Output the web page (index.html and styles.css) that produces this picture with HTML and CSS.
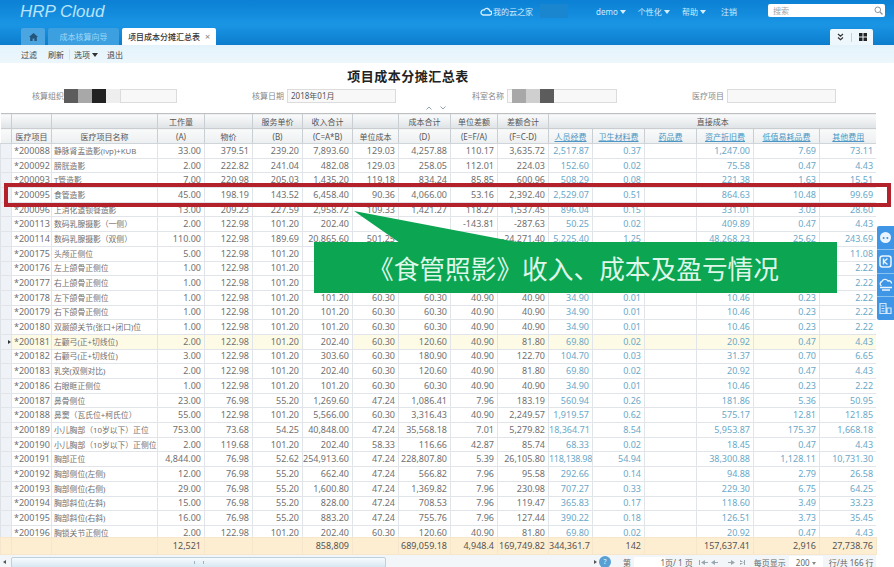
FILE: index.html
```html
<!DOCTYPE html>
<html lang="zh-CN">
<head>
  <meta charset="UTF-8" />
  <title>HRP Cloud | 项目成本分摊汇总表</title>
  <link rel="stylesheet" href="styles.css">
</head>
<body>
  <header class="topbar">
    <div class="top-row">
      <div class="logo">HRP Cloud</div>
      <nav class="top-nav">
        <a class="home-link">
          <svg width="12" height="9" viewBox="0 0 12 9"><path d="M3 8h6.500a2 2 0 0 0 .3-4A3 3 0 0 0 4.200 3 2.500 2.500 0 0 0 3 8z" fill="none" stroke="#d8f0ff" stroke-width="1.300"/></svg>
          我的云之家
        </a>
        <span class="masked-name"></span>
        <a>demo <i class="caret"></i></a>
        <a>个性化 <i class="caret"></i></a>
        <a class="nav-help">帮助 <i class="caret"></i></a>
        <a>注销</a>
      </nav>
      <div class="search">
        <span>搜索</span>
        <svg width="9" height="9" viewBox="0 0 9 9"><circle cx="3.800" cy="3.800" r="2.800" fill="none" stroke="#8a959c" stroke-width="1"/><path d="M6 6l2.500 2.500" stroke="#8a959c" stroke-width="1.200"/></svg>
      </div>
    </div>
    <div class="tab-row">
      <a class="tab tab-home">
        <svg width="9" height="8" viewBox="0 0 9 8"><path d="M4.500 0L9 4H7.800v4H5.400V5.400H3.600V8H1.200V4H0z" fill="#24557a"/></svg>
      </a>
      <a class="tab tab-wizard">成本核算向导</a>
      <a class="tab tab-active">项目成本分摊汇总表 <span class="tab-close">×</span></a>
      <div class="tab-tools">
        <svg width="7" height="8" viewBox="0 0 7 8"><path d="M1 1l2.500 2.200L6 1M1 4.500l2.500 2.200L6 4.500" fill="none" stroke="#333" stroke-width="1.200"/></svg>
        <span class="tool-sep"></span>
        <svg width="8" height="8" viewBox="0 0 8 8"><path d="M0 0h3.500v3.500H0zM4.500 0H8v3.500H4.500zM0 4.500h3.500V8H0zM4.500 4.500H8V8H4.500z" fill="#222"/></svg>
      </div>
    </div>
  </header>

  <div class="toolbar">
    <a>过滤</a>
    <a>刷新</a>
    <span class="bar-sep"></span>
    <a>选项 <i class="caret dark"></i></a>
    <a class="bar-exit">退出</a>
  </div>

  <h1 class="report-title">项目成本分摊汇总表</h1>

  <form class="filters">
    <label class="f-org">核算组织
      <span class="masked"><i class="m1"></i><i class="m2"></i><i class="m3"></i><i class="m4"></i></span>
      <input class="input-short" type="text" />
    </label>
    <label class="f-date">核算日期 <input class="input-long" type="text" value="2018年01月" /></label>
    <label class="f-dept">科室名称
      <span class="dept-box"><span class="masked"><i class="m2"></i><i class="m5"></i><i class="m1"></i></span></span>
    </label>
    <label class="f-item">医疗项目 <input class="input-long" type="text" /></label>
  </form>

  <div class="collapse-handle">
    <svg width="6" height="4" viewBox="0 0 6 4"><path d="M.5 3.500L3 1l2.500 2.500" fill="none" stroke="#8fa3ad"/></svg>
    <svg width="6" height="4" viewBox="0 0 6 4"><path d="M.5.500L3 3 5.500.500" fill="none" stroke="#8fa3ad"/></svg>
  </div>

  <section class="grid">
    <div class="grid-main">
      <table class="data">
        <colgroup><col class="c0"><col class="c1"><col class="c2"><col class="c3"><col class="c4"><col class="c5"><col class="c6"><col class="c7"><col class="c8"><col class="c9"><col class="c10"><col class="c11"><col class="c12"><col class="c13"><col class="c14"><col class="c15"><col class="c16"></colgroup>
        <thead>
          <tr class="head-top">
            <th></th><th></th><th></th><th>工作量</th><th></th><th>服务单价</th><th>收入合计</th><th></th><th>成本合计</th><th>单位差额</th><th>差额合计</th><th colspan="6">直接成本</th>
          </tr>
          <tr class="head-sub">
            <th></th><th>医疗项目</th><th>医疗项目名称</th><th>(A)</th><th>物价</th><th>(B)</th><th>(C=A*B)</th><th>单位成本</th><th>(D)</th><th>(E=F/A)</th><th>(F=C-D)</th>
            <th class="link">人员经费</th><th class="link">卫生材料费</th><th class="link">药品费</th><th class="link">资产折旧费</th><th class="link">低值易耗品费</th><th class="link">其他费用</th>
          </tr>
        </thead>
        <tbody>
          <tr><td></td><td>*200088</td><td>静脉肾盂造影(ivp)+KUB</td><td>33.00</td><td>379.51</td><td>239.20</td><td>7,893.60</td><td>129.03</td><td>4,257.88</td><td>110.17</td><td>3,635.72</td><td>2,517.87</td><td>0.37</td><td></td><td>1,247.00</td><td>7.69</td><td>73.11</td></tr>
          <tr><td></td><td>*200092</td><td>膀胱造影</td><td>2.00</td><td>222.82</td><td>241.04</td><td>482.08</td><td>129.03</td><td>258.05</td><td>112.01</td><td>224.03</td><td>152.60</td><td>0.02</td><td></td><td>75.58</td><td>0.47</td><td>4.43</td></tr>
          <tr><td></td><td>*200093</td><td>T管造影</td><td>7.00</td><td>220.98</td><td>205.03</td><td>1,435.20</td><td>119.18</td><td>834.24</td><td>85.85</td><td>600.96</td><td>508.29</td><td>0.08</td><td></td><td>221.38</td><td>1.63</td><td>15.51</td></tr>
          <tr><td></td><td>*200095</td><td>食管造影</td><td>45.00</td><td>198.19</td><td>143.52</td><td>6,458.40</td><td>90.36</td><td>4,066.00</td><td>53.16</td><td>2,392.40</td><td>2,529.07</td><td>0.51</td><td></td><td>864.63</td><td>10.48</td><td>99.69</td></tr>
          <tr><td></td><td>*200096</td><td>上消化道钡餐造影</td><td>13.00</td><td>209.23</td><td>227.59</td><td>2,958.72</td><td>109.33</td><td>1,421.27</td><td>118.27</td><td>1,537.45</td><td>896.04</td><td>0.15</td><td></td><td>331.01</td><td>3.03</td><td>28.60</td></tr>
          <tr><td></td><td>*200113</td><td>数码乳腺摄影（一侧）</td><td>2.00</td><td>122.98</td><td>101.20</td><td>202.40</td><td></td><td></td><td>-143.81</td><td>-287.63</td><td>50.25</td><td>0.02</td><td></td><td>409.89</td><td>0.47</td><td>4.43</td></tr>
          <tr><td></td><td>*200114</td><td>数码乳腺摄影（双侧）</td><td>110.00</td><td>122.98</td><td>189.69</td><td>20,865.60</td><td>501.25</td><td></td><td></td><td>-24,271.40</td><td>5,225.40</td><td>1.25</td><td></td><td>48,268.23</td><td>25.62</td><td>243.69</td></tr>
          <tr><td></td><td>*200175</td><td>头颅正侧位</td><td>5.00</td><td>122.98</td><td>101.20</td><td></td><td></td><td></td><td></td><td></td><td></td><td></td><td></td><td></td><td></td><td>11.08</td></tr>
          <tr><td></td><td>*200176</td><td>左上颌骨正侧位</td><td>1.00</td><td>122.98</td><td>101.20</td><td></td><td></td><td></td><td></td><td></td><td></td><td></td><td></td><td></td><td></td><td>2.22</td></tr>
          <tr><td></td><td>*200177</td><td>右上颌骨正侧位</td><td>1.00</td><td>122.98</td><td>101.20</td><td></td><td></td><td></td><td></td><td></td><td></td><td></td><td></td><td></td><td></td><td>2.22</td></tr>
          <tr><td></td><td>*200178</td><td>左下颌骨正侧位</td><td>1.00</td><td>122.98</td><td>101.20</td><td>101.20</td><td>60.30</td><td>60.30</td><td>40.90</td><td>40.90</td><td>34.90</td><td>0.01</td><td></td><td>10.46</td><td>0.23</td><td>2.22</td></tr>
          <tr><td></td><td>*200179</td><td>右下颌骨正侧位</td><td>1.00</td><td>122.98</td><td>101.20</td><td>101.20</td><td>60.30</td><td>60.30</td><td>40.90</td><td>40.90</td><td>34.90</td><td>0.01</td><td></td><td>10.46</td><td>0.23</td><td>2.22</td></tr>
          <tr><td></td><td>*200180</td><td>双颞颌关节(张口+闭口)位</td><td>1.00</td><td>122.98</td><td>101.20</td><td>101.20</td><td>60.30</td><td>60.30</td><td>40.90</td><td>40.90</td><td>34.90</td><td>0.01</td><td></td><td>10.46</td><td>0.23</td><td>2.22</td></tr>
          <tr class="current"><td><i class="row-mark"></i></td><td>*200181</td><td>左颧弓(正+切线位)</td><td>2.00</td><td>122.98</td><td>101.20</td><td class="plain">202.40</td><td>60.30</td><td>120.60</td><td>40.90</td><td>81.80</td><td>69.80</td><td>0.02</td><td></td><td>20.92</td><td>0.47</td><td>4.43</td></tr>
          <tr><td></td><td>*200182</td><td>右颧弓(正+切线位)</td><td>3.00</td><td>122.98</td><td>101.20</td><td>303.60</td><td>60.30</td><td>180.90</td><td>40.90</td><td>122.70</td><td>104.70</td><td>0.03</td><td></td><td>31.37</td><td>0.70</td><td>6.65</td></tr>
          <tr><td></td><td>*200183</td><td>乳突(双侧对比)</td><td>2.00</td><td>122.98</td><td>101.20</td><td>202.40</td><td>60.30</td><td>120.60</td><td>40.90</td><td>81.80</td><td>69.80</td><td>0.02</td><td></td><td>20.92</td><td>0.47</td><td>4.43</td></tr>
          <tr><td></td><td>*200186</td><td>右眼眶正侧位</td><td>1.00</td><td>122.98</td><td>101.20</td><td>101.20</td><td>60.30</td><td>60.30</td><td>40.90</td><td>40.90</td><td>34.90</td><td>0.01</td><td></td><td>10.46</td><td>0.23</td><td>2.22</td></tr>
          <tr><td></td><td>*200187</td><td>鼻骨侧位</td><td>23.00</td><td>76.98</td><td>55.20</td><td>1,269.60</td><td>47.24</td><td>1,086.41</td><td>7.96</td><td>183.19</td><td>560.94</td><td>0.26</td><td></td><td>181.86</td><td>5.36</td><td>50.95</td></tr>
          <tr><td></td><td>*200188</td><td>鼻窦（瓦氏位+柯氏位）</td><td>55.00</td><td>122.98</td><td>101.20</td><td>5,566.00</td><td>60.30</td><td>3,316.43</td><td>40.90</td><td>2,249.57</td><td>1,919.57</td><td>0.62</td><td></td><td>575.17</td><td>12.81</td><td>121.85</td></tr>
          <tr><td></td><td>*200189</td><td>小儿胸部（10岁以下）正位</td><td>753.00</td><td>73.68</td><td>54.25</td><td>40,848.00</td><td>47.24</td><td>35,568.18</td><td>7.01</td><td>5,279.82</td><td>18,364.71</td><td>8.54</td><td></td><td>5,953.87</td><td>175.37</td><td>1,668.18</td></tr>
          <tr><td></td><td>*200190</td><td>小儿胸部（10岁以下）正侧位</td><td>2.00</td><td>119.68</td><td>101.20</td><td>202.40</td><td>58.33</td><td>116.66</td><td>42.87</td><td>85.74</td><td>68.33</td><td>0.02</td><td></td><td>18.45</td><td>0.47</td><td>4.43</td></tr>
          <tr><td></td><td>*200191</td><td>胸部正位</td><td>4,844.00</td><td>76.98</td><td>52.62</td><td>254,913.60</td><td>47.24</td><td>228,807.80</td><td>5.39</td><td>26,105.80</td><td class="tight">118,138.98</td><td>54.94</td><td></td><td>38,300.88</td><td>1,128.11</td><td>10,731.30</td></tr>
          <tr><td></td><td>*200192</td><td>胸部侧位(左侧)</td><td>12.00</td><td>76.98</td><td>55.20</td><td>662.40</td><td>47.24</td><td>566.82</td><td>7.96</td><td>95.58</td><td>292.66</td><td>0.14</td><td></td><td>94.88</td><td>2.79</td><td>26.58</td></tr>
          <tr><td></td><td>*200193</td><td>胸部侧位(右侧)</td><td>29.00</td><td>76.98</td><td>55.20</td><td>1,600.80</td><td>47.24</td><td>1,369.82</td><td>7.96</td><td>230.98</td><td>707.27</td><td>0.33</td><td></td><td>229.30</td><td>6.75</td><td>64.25</td></tr>
          <tr><td></td><td>*200194</td><td>胸部斜位(左斜)</td><td>15.00</td><td>76.98</td><td>55.20</td><td>828.00</td><td>47.24</td><td>708.53</td><td>7.96</td><td>119.47</td><td>365.83</td><td>0.17</td><td></td><td>118.60</td><td>3.49</td><td>33.23</td></tr>
          <tr><td></td><td>*200195</td><td>胸部斜位(右斜)</td><td>16.00</td><td>76.98</td><td>55.20</td><td>883.20</td><td>47.24</td><td>755.76</td><td>7.96</td><td>127.44</td><td>390.22</td><td>0.18</td><td></td><td>126.51</td><td>3.73</td><td>35.45</td></tr>
          <tr><td></td><td>*200196</td><td>胸锁关节正侧位</td><td>2.00</td><td>122.98</td><td>101.20</td><td>202.40</td><td>60.30</td><td>120.60</td><td>40.90</td><td>81.80</td><td>69.80</td><td>0.02</td><td></td><td>20.92</td><td>0.47</td><td>4.43</td></tr>
        </tbody>
      </table>
    </div>

    <table class="data totals">
      <colgroup><col class="c0"><col class="c1"><col class="c2"><col class="c3"><col class="c4"><col class="c5"><col class="c6"><col class="c7"><col class="c8"><col class="c9"><col class="c10"><col class="c11"><col class="c12"><col class="c13"><col class="c14"><col class="c15"><col class="c16"></colgroup>
      <tr><td></td><td></td><td></td><td>12,521</td><td></td><td></td><td>858,809</td><td></td><td>689,059.18</td><td>4,948.4</td><td>169,749.82</td><td>344,361.7</td><td>142</td><td></td><td>157,637.41</td><td>2,916</td><td>27,738.76</td></tr>
    </table>

    <div class="grid-foot">
      <div class="scroll">
        <span class="scroll-arrow left"></span>
        <div class="scroll-track"><span class="thumb-grip"></span></div>
      </div>
      <div class="pager">
        <span class="scroll-arrow right"></span>
        <span class="help-dot">?</span>
        <span class="page-of">第</span>
        <span class="page-box">1</span>
        <span>页/ 1 页</span>
        <span class="pager-nav">
          <svg width="46" height="7" viewBox="0 0 46 7" fill="#9aa7b0"><path d="M0 1h1v5H0zM6 1v5L2 3.500zM6 3h3v1H6zM16 1v5l-4-2.500zM16 3h3v1h-3zM29 3h3v1h-3zM32 1v5l4-2.500zM41 3h3v1h-3zM41 1v5l4-2.500zM45 1h1v5h-1z"/></svg>
        </span>
        <span>每页显示</span>
        <span class="size-box">200 <i class="caret small"></i></span>
        <span>行/共 166 行</span>
      </div>
    </div>
  </section>

  <!-- callout drawn on top of the grid -->
  <div class="row-highlight"></div>
  <svg class="callout-arrow" width="170" height="34" viewBox="0 0 170 34"><path d="M0 0L46 32H168z" fill="#0ca552"/></svg>
  <div class="callout">《食管照影》收入、成本及盈亏情况</div>

  <aside class="side-tools">
    <a>
      <svg width="13" height="13" viewBox="0 0 13 13"><circle cx="6.500" cy="6.500" r="5.500" fill="#eaf5ff"/><circle cx="4.600" cy="7" r="1" fill="#3f8fd8"/><circle cx="8.400" cy="7" r="1" fill="#3f8fd8"/></svg>
    </a>
    <a>
      <svg width="13" height="13" viewBox="0 0 13 13"><rect x="1" y="1" width="11" height="11" rx="2.500" fill="none" stroke="#eaf5ff" stroke-width="1.500"/><path d="M4.500 3.500v6M8.500 3.500L5 6.500l3.500 3" fill="none" stroke="#eaf5ff" stroke-width="1.400"/></svg>
    </a>
    <a>
      <svg width="14" height="13" viewBox="0 0 14 13"><path d="M2.500 8a2.500 2.500 0 0 1 .3-4.500A3.500 3.500 0 0 1 9 3a2.500 2.500 0 0 1 3.500 2.500" fill="none" stroke="#eaf5ff" stroke-width="1.400"/><path d="M1 9.500h12M3 12h8" stroke="#eaf5ff" stroke-width="1.400"/></svg>
    </a>
    <a>
      <svg width="13" height="13" viewBox="0 0 13 13"><path d="M1 1.500h6v10H1zM8 6h4v5.500H8z" fill="none" stroke="#cfe8fb" stroke-width="1.200"/><path d="M2.500 4h3M2.500 6.500h3M2.500 9h3" stroke="#cfe8fb" stroke-width="1"/></svg>
    </a>
  </aside>
</body>
</html>
```

FILE: styles.css
```css
html, body {
  margin: 0;
  height: 567px;
  overflow: hidden;
}
body {
  position: relative;
  background-color: #fff;
  color: #707070;
  font-family: "Noto Sans", "Noto Sans CJK SC", sans-serif;
  font-size: 9px;
}

/* top blue bar */
.topbar {
  height: 45px;
  background: linear-gradient(#0b80d4, #1a95e4 55%, #0c7dcd);
  display: flex;
  flex-direction: column;
}
.top-row {
  height: 28px;
  display: flex;
  align-items: flex-start;
  padding-left: 20px;
}
.logo {
  width: 460px;
  margin-top: 2px;
  color: #b8e4fa;
  font-family: "Liberation Sans", sans-serif;
  font-size: 17px;
  font-style: italic;
  line-height: 20px;
}
.top-nav {
  display: flex;
  align-items: center;
  height: 22px;
  color: #cdebfd;
  font-size: 8px;
  white-space: nowrap;
}
.top-nav a {
  margin-right: 12px;
}
.top-nav .home-link {
  display: flex;
  align-items: center;
  gap: 1px;
  margin-right: 7px;
}
.top-nav .nav-help {
  margin-right: 15px;
}
.masked-name {
  width: 28px;
  height: 14px;
  margin-right: 28px;
  background-color: #1a86cf;
}
.caret {
  display: inline-block;
  width: 0;
  height: 0;
  vertical-align: 1px;
  border-left: 3px solid transparent;
  border-right: 3px solid transparent;
  border-top: 4px solid #d5effe;
}
.caret.dark {
  border-top-color: #333;
}
.caret.small {
  border-left-width: 2px;
  border-right-width: 2px;
  border-top: 3px solid #888;
}
.search {
  width: 117px;
  height: 13px;
  margin: 4px 0 0 19px;
  padding: 0 2px 0 5px;
  box-sizing: border-box;
  display: flex;
  align-items: center;
  justify-content: space-between;
  background-color: #fff;
  border-radius: 2px;
  color: #9aa5ab;
  font-size: 8px;
}

.tab-row {
  height: 17px;
  display: flex;
  align-items: flex-end;
  padding-left: 21px;
}
.tab {
  height: 17px;
  display: flex;
  align-items: center;
  justify-content: center;
  box-sizing: border-box;
  border-radius: 2px 2px 0 0;
}
.tab-home {
  width: 24px;
  margin-right: 3px;
  background-color: #4aa5e0;
}
.tab-wizard {
  width: 71px;
  margin-right: 3px;
  background-color: #3c9fe0;
  color: #9fd8f8;
  font-size: 8px;
}
.tab-active {
  width: 94px;
  background-color: #fff;
  color: #333;
  font-size: 8px;
  font-weight: 500;
}
.tab-close {
  margin-left: 5px;
  color: #888;
  font-size: 9px;
}
.tab-tools {
  width: 43px;
  height: 16px;
  margin-left: auto;
  margin-right: 21px;
  display: flex;
  align-items: center;
  justify-content: center;
  gap: 7px;
  background-color: #eef7fc;
  border-radius: 2px 2px 0 0;
}
.tool-sep {
  width: 1px;
  height: 9px;
  background-color: #ccd;
}

/* action bar */
.toolbar {
  height: 18px;
  padding-left: 21px;
  display: flex;
  align-items: center;
  gap: 11px;
  background: linear-gradient(#e4f3fb, #edf7fc);
  color: #444;
  font-size: 8px;
}
.bar-sep {
  width: 1px;
  height: 11px;
  margin: 0 -7px 0 -6px;
  background-color: #d4e3ec;
}
.bar-exit {
  margin-left: -2px;
}

.report-title {
  margin: 5px 0 0;
  height: 16px;
  padding-right: 78px;
  text-align: center;
  color: #222;
  font-family: "Noto Sans CJK SC", sans-serif;
  font-size: 13px;
  font-weight: 700;
  line-height: 16px;
  letter-spacing: 0.500px;
}

/* query form */
.filters {
  display: flex;
  height: 14px;
  margin-top: 5px;
  color: #888;
  font-size: 8px;
  line-height: 14px;
}
.filters label {
  display: flex;
  align-items: center;
  white-space: nowrap;
  gap: 3px;
}
.filters .f-org { margin-left: 32px; width: 220px; gap: 0; }
.f-date { width: 220px; }
.f-dept { width: 220px; }
.filters input, .dept-box {
  height: 14px;
  margin: 0;
  padding: 0 3px;
  box-sizing: border-box;
  background-color: #f8f8f8;
  border: 1px solid #dcdcdc;
  color: #555;
  font: inherit;
}
.input-short { width: 57px; }
.input-long { width: 109px; }
.dept-box {
  display: block;
  width: 110px;
}
.masked {
  display: flex;
  height: 14px;
}
.masked i { width: 14px; height: 14px; display: block; }
.m1 { background-color: #5c5c5c; }
.m2 { background-color: #a8a8a8; }
.m3 { background-color: #222; }
.m4 { background-color: #eee; }
.m5 { background-color: #cfcfcf; }
.dept-box .masked { margin: -1px 0 0 1px; }

.collapse-handle {
  width: 30px;
  height: 10px;
  margin-left: 421px;
  display: flex;
  align-items: center;
  justify-content: center;
  gap: 8px;
}

/* data grid */
.grid {
  width: 876px;
}
.grid-main {
  height: 424px;
  overflow: hidden;
}
.data {
  width: 876px;
  table-layout: fixed;
  border-collapse: collapse;
}
.c0 { width: 11px; }
.c1 { width: 40px; }
.c2 { width: 106px; }
.c3 { width: 47px; }
.c4 { width: 48px; }
.c5 { width: 50px; }
.c6 { width: 50px; }
.c7 { width: 46px; }
.c8 { width: 52px; }
.c9 { width: 47px; }
.c10 { width: 51px; }
.c11 { width: 44px; }
.c12 { width: 52px; }
.c13 { width: 52px; }
.c14 { width: 57px; }
.c15 { width: 66px; }
.c16 { width: 57px; }
.data th {
  padding: 0;
  border-left: 1px solid #c9ced3;
  color: #555;
  font-size: 8px;
  font-weight: 400;
  white-space: nowrap;
}
.data th:first-child {
  border-left: 0;
}
.head-top th {
  height: 15px;
  background: linear-gradient(#fafbfb, #dfe3e6);
  border-top: 1px solid #bdbfc1;
  box-sizing: border-box;
}
.head-sub th {
  height: 15px;
  background: linear-gradient(#f9fafa, #eceff1);
  border-top: 1px solid #c9cdd0;
  border-bottom: 1px solid #d0d5d9;
  box-sizing: border-box;
}
.data th.link {
  color: #4c97c4;
  font-size: 8px;
  text-decoration: underline;
}
.data td {
  height: 14.700px;
  padding: 0 3px 0 0;
  box-sizing: border-box;
  border: 1px solid #e1e5e9;
  border-left-color: #dde2e6;
  overflow: hidden;
  text-align: right;
  white-space: nowrap;
  font-size: 9px;
  line-height: 12px;
}
.data td:nth-child(1) {
  padding: 0;
  background-color: #eff3f7;
}
.data td:nth-child(2), .data td:nth-child(3) {
  padding: 0 0 0 2px;
  text-align: left;
}
.data td:nth-child(3) {
  font-size: 7.800px;
}
.data td:nth-child(n+12) {
  color: #6aa8c8;
}
.data td.tight {
  padding-right: 1px;
  letter-spacing: -0.300px;
}
.current td {
  background-color: #fdfbe6;
}
.current td.plain {
  background-color: #fff;
}
.row-mark {
  display: inline-block;
  margin-left: 4px;
  vertical-align: 1px;
  border-left: 3px solid #333;
  border-top: 2px solid transparent;
  border-bottom: 2px solid transparent;
}

.totals td, .totals td:nth-child(1), .totals td:nth-child(n+12) {
  height: 17px;
  background-color: #fdeed2;
  border-color: #f6e6cb;
  color: #555;
}
.grid-foot {
  height: 14px;
  display: flex;
  align-items: center;
  background-color: #f3f6f8;
  width: 876px;
}
.scroll {
  width: 386px;
  display: flex;
  align-items: center;
}
.scroll-arrow {
  display: inline-block;
  border-top: 2px solid transparent;
  border-bottom: 2px solid transparent;
}
.scroll-arrow.left {
  margin: 0 5px 0 3px;
  border-right: 3px solid #555;
}
.scroll-arrow.right {
  margin-left: 208px;
  border-left: 3px solid #555;
}
.scroll-track {
  flex: 1;
  height: 9px;
  display: flex;
  align-items: center;
  justify-content: center;
  border: 1px solid #bcd0de;
  border-radius: 2px;
  background: linear-gradient(#f7fbfd, #d7e8f3);
}
.thumb-grip {
  width: 8px;
  height: 3px;
  border-left: 1px solid #9fb4c2;
  border-right: 1px solid #9fb4c2;
}
.pager {
  display: flex;
  align-items: center;
  color: #666;
  font-size: 8px;
  white-space: nowrap;
}
.help-dot {
  width: 12px;
  height: 12px;
  margin-left: 2px;
  border-radius: 50%;
  background-color: #5a9fd4;
  color: #dff;
  font-size: 7px;
  line-height: 12px;
  text-align: center;
}
.page-of {
  margin-left: 12px;
  margin-right: 3px;
}
.page-box {
  width: 31px;
  text-align: right;
  background-color: #fff;
}
.pager-nav {
  margin: 0 9px 0 6px;
  line-height: 7px;
  display: flex;
}
.size-box {
  width: 34px;
  height: 13px;
  margin: 0 6px 0 3px;
  background-color: #fff;
  text-align: center;
  line-height: 13px;
}

/* overlays */
.row-highlight {
  position: absolute;
  left: 4px;
  top: 183px;
  width: 887px;
  height: 24px;
  box-sizing: border-box;
  border: 4px solid #b3212a;
}
.callout-arrow {
  position: absolute;
  left: 354px;
  top: 211px;
}
.callout {
  position: absolute;
  left: 314px;
  top: 242px;
  width: 523px;
  height: 51px;
  box-sizing: border-box;
  padding-left: 54px;
  background-color: #0ca552;
  color: #dff7e8;
  font-family: "Noto Sans CJK SC", sans-serif;
  font-size: 25.700px;
  line-height: 51px;
  white-space: nowrap;
}
.side-tools {
  position: absolute;
  left: 877px;
  top: 226px;
  width: 17px;
  height: 94px;
  display: flex;
  flex-direction: column;
  background-color: #3f96e6;
  border-radius: 2px 0 0 2px;
}
.side-tools a {
  flex: 1;
  display: flex;
  align-items: center;
  justify-content: center;
  border-bottom: 1px solid #8cc2f0;
}
.side-tools a:last-child {
  border-bottom: 0;
}
```
